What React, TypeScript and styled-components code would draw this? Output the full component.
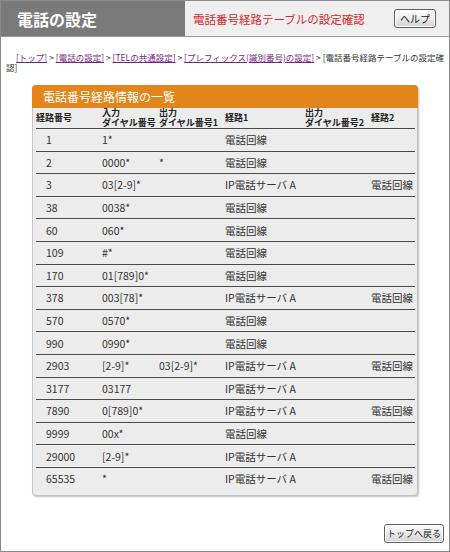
import React from "react";
import styled, { createGlobalStyle } from "styled-components";

const Global = createGlobalStyle`
  html, body { margin: 0; padding: 0; background: #fff; }
  body { font-family: "Noto Sans CJK JP", "Noto Sans", sans-serif; }
  * { box-sizing: border-box; }
`;

const Frame = styled.div`
  width: 450px;
  height: 552px;
  border: 1px solid #8a8a8a;
  display: flex;
  flex-direction: column;
  background: #fff;
`;

const Header = styled.div`
  display: flex;
  height: 36px;
  border-bottom: 1px solid #9a9a9a;
`;

const TitleBlock = styled.div`
  width: 184px;
  background: #7a7a7a;
  color: #fff;
  font-weight: bold;
  font-size: 16px;
  display: flex;
  align-items: center;
  padding-left: 16px;
`;

const SubBlock = styled.div`
  flex: 1;
  background: #efefef;
  display: flex;
  align-items: center;
  justify-content: space-between;
  padding: 0 13px 0 8px;
`;

const SubTitle = styled.span`
  color: #d8282e;
  font-size: 11.5px;
`;

const Btn = styled.button<{ $w: number; $fs: number }>`
  width: ${(p) => p.$w}px;
  height: 19px;
  padding: 0;
  border: 1px solid #5e5e5e;
  border-radius: 3px;
  background: linear-gradient(#ffffff, #e6e6e6 60%, #d2d2d2);
  box-shadow: inset 0 0 0 1px #fff;
  font-family: "Noto Sans CJK JP", sans-serif;
  font-size: ${(p) => p.$fs}px;
  color: #222;
  line-height: 17px;
  white-space: nowrap;
`;

const Crumbs = styled.div`
  padding: 15px 1px 0 5px;
  font-size: 8.5px;
  line-height: 10px;
  color: #333;
  text-indent: 10px;
`;

const CrumbLink = styled.a`
  color: #7a1f8a;
  text-decoration: underline;
`;

const Panel = styled.div`
  margin: 13px 0 0 31px;
  width: 386px;
  background: #ececec;
  border: 1px solid #c4c4c4;
  border-radius: 4px;
  box-shadow: 1px 1px 2px rgba(0, 0, 0, 0.25);
  padding: 0 2px 5px 3px;
`;

const PanelHead = styled.div`
  margin: -1px -3px 0 -4px;
  height: 23px;
  background: #e2861c;
  border-radius: 4px 4px 0 0;
  color: #fff;
  font-size: 12px;
  display: flex;
  align-items: center;
  padding-left: 11px;
`;

const Grid = styled.div`
  display: grid;
  grid-template-columns: 66px 57px 66px 80px 66px 1fr;
  align-items: center;
`;

const HeadRow = styled(Grid)`
  height: 20px;
  font-size: 9px;
  font-weight: bold;
  line-height: 10px;
  color: #222;
`;

const Row = styled(Grid)`
  height: 22.6px;
  border-top: 1px solid #4a4a4a;
  font-size: 10.5px;
  color: #333;
`;

const Cell = styled.div<{ $pad?: number }>`
  padding-left: ${(p) => p.$pad ?? 0}px;
  white-space: nowrap;
`;

const Footer = styled.div`
  margin-top: auto;
  display: flex;
  justify-content: flex-end;
  padding: 0 5px 8px 0;
`;

const rows: [string, string, string, string, string, string][] = [
  ["1", "1*", "", "電話回線", "", ""],
  ["2", "0000*", "*", "電話回線", "", ""],
  ["3", "03[2-9]*", "", "IP電話サーバ A", "", "電話回線"],
  ["38", "0038*", "", "電話回線", "", ""],
  ["60", "060*", "", "電話回線", "", ""],
  ["109", "#*", "", "電話回線", "", ""],
  ["170", "01[789]0*", "", "電話回線", "", ""],
  ["378", "003[78]*", "", "IP電話サーバ A", "", "電話回線"],
  ["570", "0570*", "", "電話回線", "", ""],
  ["990", "0990*", "", "電話回線", "", ""],
  ["2903", "[2-9]*", "03[2-9]*", "IP電話サーバ A", "", "電話回線"],
  ["3177", "03177", "", "IP電話サーバ A", "", ""],
  ["7890", "0[789]0*", "", "IP電話サーバ A", "", "電話回線"],
  ["9999", "00x*", "", "電話回線", "", ""],
  ["29000", "[2-9]*", "", "IP電話サーバ A", "", ""],
  ["65535", "*", "", "IP電話サーバ A", "", "電話回線"],
];

export default function App() {
  return (
    <>
      <Global />
      <Frame>
        <Header>
          <TitleBlock>電話の設定</TitleBlock>
          <SubBlock>
            <SubTitle>電話番号経路テーブルの設定確認</SubTitle>
            <Btn $w={42} $fs={10}>ヘルプ</Btn>
          </SubBlock>
        </Header>
        <Crumbs>
          <CrumbLink href="#">[トップ]</CrumbLink> &gt; <CrumbLink href="#">[電話の設定]</CrumbLink> &gt;{" "}
          <CrumbLink href="#">[TELの共通設定]</CrumbLink> &gt;{" "}
          <CrumbLink href="#">[プレフィックス(識別番号)の設定]</CrumbLink> &gt; [電話番号経路テーブルの設定確認]
        </Crumbs>
        <Panel>
          <PanelHead>電話番号経路情報の一覧</PanelHead>
          <HeadRow>
            <Cell>経路番号</Cell>
            <Cell>
              入力
              <br />
              ダイヤル番号
            </Cell>
            <Cell>
              出力
              <br />
              ダイヤル番号1
            </Cell>
            <Cell>経路1</Cell>
            <Cell>
              出力
              <br />
              ダイヤル番号2
            </Cell>
            <Cell>経路2</Cell>
          </HeadRow>
          {rows.map((r) => (
            <Row key={r[0]}>
              <Cell $pad={10}>{r[0]}</Cell>
              <Cell>{r[1]}</Cell>
              <Cell>{r[2]}</Cell>
              <Cell>{r[3]}</Cell>
              <Cell>{r[4]}</Cell>
              <Cell>{r[5]}</Cell>
            </Row>
          ))}
        </Panel>
        <Footer>
          <Btn $w={60} $fs={9}>トップへ戻る</Btn>
        </Footer>
      </Frame>
    </>
  );
}
